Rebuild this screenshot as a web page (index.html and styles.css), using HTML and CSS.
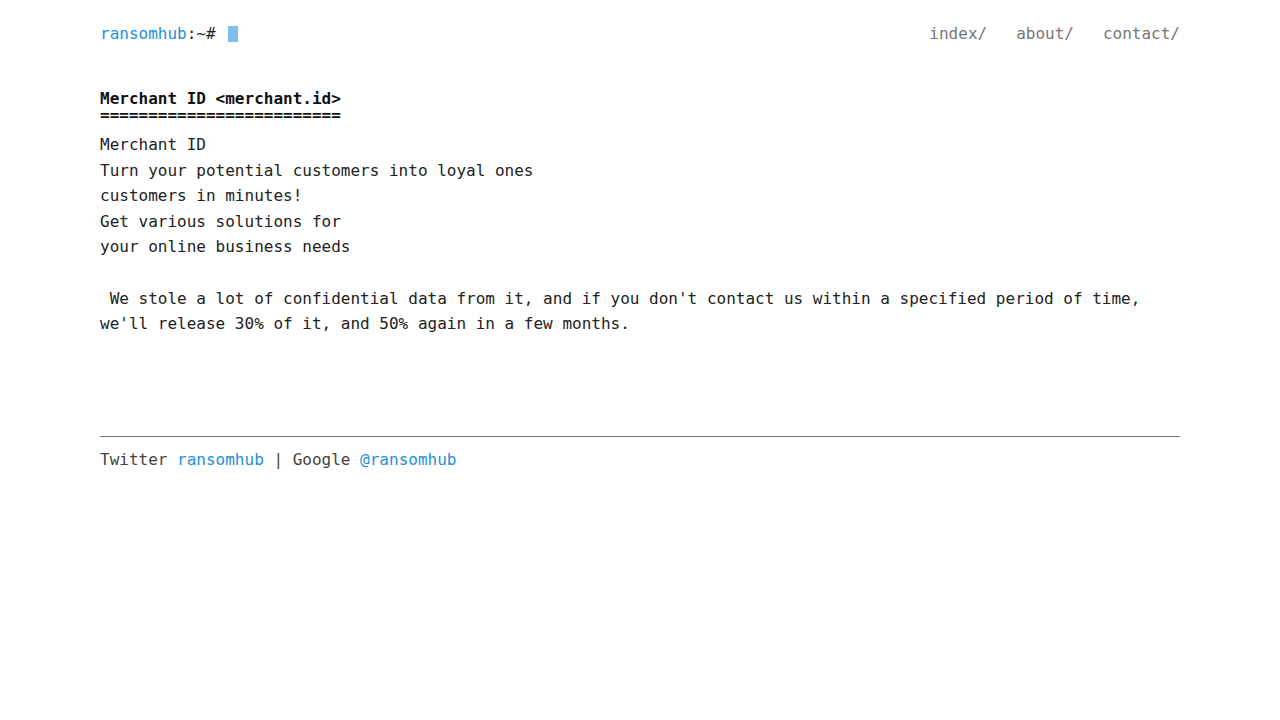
FILE: index.html
```html
<!DOCTYPE html>
<html lang="en">
<head>
<meta charset="utf-8">
<title>ransomhub</title>
<link rel="stylesheet" href="styles.css">
</head>
<body>
<div class="container">
  <header class="header">
    <div class="logo"><a href="#" class="link">ransomhub</a><span class="prompt">:~#</span><span class="cursor"></span></div>
    <nav class="nav">
      <a href="#" class="nav-item">index/</a>
      <a href="#" class="nav-item">about/</a>
      <a href="#" class="nav-item">contact/</a>
    </nav>
  </header>
  <main class="content">
    <h1 class="title"><span class="title-line">Merchant ID &lt;merchant.id&gt;</span><span class="title-line">=========================</span></h1>
    <div class="body-text">Merchant ID
Turn your potential customers into loyal ones
customers in minutes!
Get various solutions for
your online business needs

 We stole a lot of confidential data from it, and if you don't contact us within a specified period of time, we'll release 30% of it, and 50% again in a few months.</div>
  </main>
  <footer class="footer">
    Twitter <a href="#" class="link">ransomhub</a> | Google <a href="#" class="link">@ransomhub</a>
  </footer>
</div>
</body>
</html>
```

FILE: styles.css
```css
html, body {
  margin: 0;
  padding: 0;
  background: #fff;
}
body {
  font-family: "DejaVu Sans Mono", "Liberation Mono", monospace;
  font-size: 16px;
  color: #222;
  line-height: 1.6;
}
.container {
  width: 1080px;
  margin: 0 auto;
  padding-top: 21px;
}
.header {
  display: flex;
  justify-content: space-between;
  align-items: center;
  height: 26px;
}
.logo {
  display: flex;
  align-items: center;
}
.link {
  color: #1f8fdd;
  text-decoration: none;
}
.prompt {
  color: #222;
}
.cursor {
  display: inline-block;
  width: 10px;
  height: 16px;
  margin-left: 12px;
  background: #7cbff0;
}
.nav {
  display: flex;
  gap: 29px;
}
.nav-item {
  color: #777;
  text-decoration: none;
}
.content {
  margin-top: 44px;
}
.title {
  font-size: 16px;
  font-weight: bold;
  line-height: 16px;
  margin: 0;
  color: #111;
}
.title-line {
  display: block;
}
.body-text {
  margin-top: 9px;
  white-space: pre-wrap;
  color: #222;
}
.footer {
  margin-top: 99px;
  border-top: 1px solid #777;
  padding-top: 10px;
  color: #444;
}
```
